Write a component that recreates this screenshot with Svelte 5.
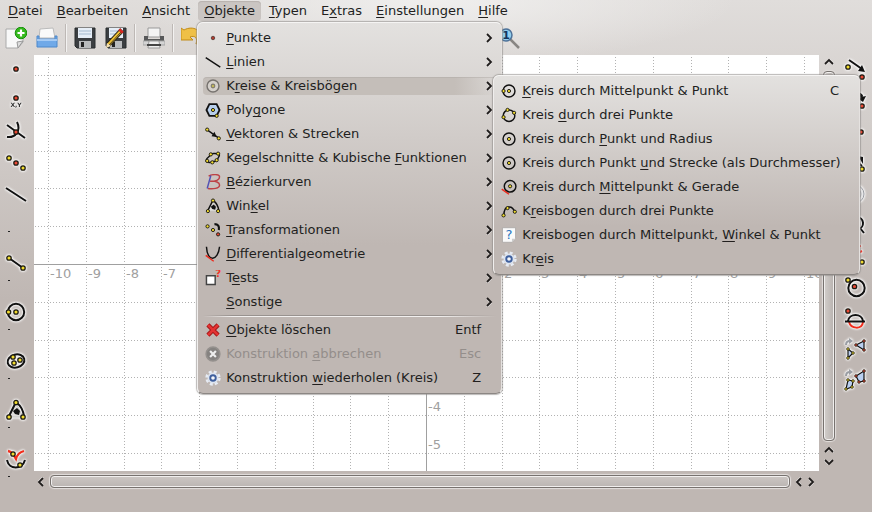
<script>
  const menus = ['_Datei', '_Bearbeiten', '_Ansicht', '_Objekte', '_Typen', 'E_xtras', '_Einstellungen', '_Hilfe'];

  const objectMenu = [
    { label: '_Punkte', icon: 'dot', sub: true },
    { label: '_Linien', icon: 'line', sub: true },
    { label: 'K_reise & Kreisbögen', icon: 'circleFaded', sub: true, open: true },
    { label: 'Poly_gone', icon: 'polygon', sub: true },
    { label: '_Vektoren & Strecken', icon: 'vector', sub: true },
    { label: 'Kegelschnitte & Kubische _Funktionen', icon: 'cubic', sub: true },
    { label: '_Bézierkurven', icon: 'bezier', sub: true },
    { label: 'Win_kel', icon: 'angle', sub: true },
    { label: '_Transformationen', icon: 'transform', sub: true },
    { label: '_Differentialgeometrie', icon: 'tangent', sub: true },
    { label: 'T_ests', icon: 'test', sub: true },
    { label: '_Sonstige', sub: true },
    { separator: true },
    { label: '_Objekte löschen', icon: 'delete', key: 'Entf' },
    { label: 'Konstruktion _abbrechen', icon: 'cancel', key: 'Esc', disabled: true },
    { label: 'Konstruktion _wiederholen (Kreis)', icon: 'gear', key: 'Z' }
  ];

  const circleMenu = [
    { label: '_Kreis durch Mittelpunkt & Punkt', icon: 'circle', key: 'C' },
    { label: 'Kreis _durch drei Punkte', icon: 'circle3' },
    { label: 'Kreis durch _Punkt und Radius', icon: 'circleCenter' },
    { label: 'Kreis durch Punkt _und Strecke (als Durchmesser)', icon: 'circleCenter' },
    { label: 'Kreis durch _Mittelpunkt & Gerade', icon: 'circleTangent' },
    { label: 'K_reisbogen durch drei Punkte', icon: 'arc' },
    { label: 'Kreisbogen durch Mittelpunkt, _Winkel & Punkt', icon: 'help' },
    { label: 'Kr_eis', icon: 'gear' }
  ];

  const fileTools = [
    { icon: 'new', label: 'Neu' },
    { icon: 'open', label: 'Öffnen' },
    null,
    { icon: 'save', label: 'Speichern' },
    { icon: 'saveAs', label: 'Speichern unter' },
    null,
    { icon: 'print', label: 'Drucken' },
    null,
    { icon: 'undo', label: 'Rückgängig' }
  ];

  const pointTools = ['point', 'pointXY', 'intersect', 'midpoint', 'line'];
  const shapeTools = ['segment', 'circle', 'conic', 'angle', 'curves'];
  const transformTools = ['translate', 'rotate', 'reflect', 'scale', 'ghost', 'similar', 'project', 'invert', 'dome', 'triangles', 'quads'];

  const unit = 37.8;
  const origin = { x: 392, y: 209 };
  const range = (from, to) => Array.from({ length: to - from + 1 }, (_, i) => from + i).filter((n) => n !== 0);
  const steps = range(-50, 50);
  const xLabels = range(-10, 10);
  const yLabels = range(-5, 5);
  const gridX = (n) => origin.x + Math.round(n * unit);
  const gridY = (n) => origin.y - Math.round(n * unit);

  const split = (label) => {
    const i = label.indexOf('_');
    return [label.slice(0, i), label[i + 1], label.slice(i + 2)];
  };
</script>

{#snippet caption(label)}
  {@const p = split(label)}<span>{p[0]}<u>{p[1]}</u>{p[2]}</span>
{/snippet}

{#snippet pt(x, y, c = '#f2dc2e')}
  <circle cx={x} cy={y} r="2.2" fill={c} stroke="#1c1a12" stroke-width="1.300" />
{/snippet}

{#snippet red(x, y)}
  {@render pt(x, y, '#ea4935')}
{/snippet}

{#snippet icon(name, size)}
  <svg class="icon" width={size} height={size} viewBox="0 0 22 22" fill="none" stroke="#111" stroke-width="2" aria-hidden="true">
    {#if name === 'dot'}
      <circle cx="11" cy="11" r="2.4" fill="#b03b30" stroke="#59413c" stroke-width="1.2" />
    {:else if name === 'point'}
      {@render red(11, 10)}
    {:else if name === 'pointXY'}
      {@render red(11, 8)}
      <text x="11" y="17" text-anchor="middle" font-size="6" font-weight="bold" fill="#333" stroke="none">X,Y</text>
    {:else if name === 'intersect'}
      <path d="M2 4 20 17M12 1C16 9 11 17 2 16" />{@render red(11, 11)}
    {:else if name === 'midpoint'}
      {@render pt(4, 6)}{@render red(11, 11)}{@render pt(18, 16)}
    {:else if name === 'line'}
      <path d="M1 5 21 18" />
    {:else if name === 'segment'}
      <path d="M4 6 18 16" />{@render pt(4, 6)}{@render pt(18, 16)}
    {:else if name === 'vector'}
      <path d="M4 6 18 16" /><path d="m9 14 7 1-3-7z" fill="#111" stroke="none" />{@render pt(3, 5)}{@render pt(19, 17)}
    {:else if name === 'circle'}
      <circle cx="11" cy="11" r="8.2" />{@render pt(3.5, 11)}{@render pt(11, 11)}
    {:else if name === 'circleCenter'}
      <circle cx="11" cy="11" r="8.2" />{@render pt(11, 11)}
    {:else if name === 'circleFaded'}
      <circle cx="11" cy="11" r="8.2" fill="#d5d1cc" stroke="#77736f" /><circle cx="11" cy="11" r="2.3" fill="#d9cd52" stroke="#85806f" />
    {:else if name === 'circle3'}
      <circle cx="11" cy="12" r="8" />{@render pt(3.5, 14)}{@render pt(9, 4)}{@render pt(18, 8)}
    {:else if name === 'circleTangent'}
      <circle cx="12.500" cy="10" r="8" /><path d="m1 14 10 7" stroke="#ed2b1c" />{@render pt(12.5, 10)}
    {:else if name === 'arc'}
      <path d="M4 17C4 2 16 3 19 13" />{@render pt(3.5, 17)}{@render pt(9, 7)}{@render pt(19, 12)}
    {:else if name === 'polygon'}
      <path d="M6 3h10l4 8-4 8H6l-4-8z" fill="#b8cfeb" stroke-width="2.5" />{@render pt(11, 11)}{@render pt(16, 19)}
    {:else if name === 'cubic'}
      <path d="M8 6c4-3 6 0 11-1 3 3-2 5-2 9-3 4-6 0-9 3-4 1-7-1-6-4 1-3 4-3 6-7z" />
      {@render pt(8, 6)}{@render pt(18, 5)}{@render pt(16, 14)}{@render pt(10, 17)}{@render pt(3, 15)}
    {:else if name === 'conic'}
      <ellipse cx="11" cy="11" rx="8.500" ry="6.500" transform="rotate(-15 11 11)" />{@render pt(8, 7)}{@render pt(9, 13)}{@render pt(15, 10)}
    {:else if name === 'bezier'}
      <path d="M5 3C10 0 20 0 20 4c0 5-7 6-13 6 8-1 13 2 13 5 0 5-9 6-16 5" stroke="#bd4145" /><path d="M8 2 3 20" stroke="#5351b4" />
    {:else if name === 'angle'}
      <path d="M11 4 4 18h14z" fill="#dfdddb" stroke="#c4c2c0" stroke-width="1" /><path d="m4 17 6-12M12 4c4 3 6 7 7 13" /><path d="m8 12 4-3 3 3-1 4-4-1z" fill="#111" stroke="none" />
      {@render pt(11, 3.5)}{@render pt(4, 18)}{@render pt(18, 18)}
    {:else if name === 'curves'}
      <path d="M3 3c5 1 6 5 8 8 1-4 4-7 8-8" stroke="#f12d1c" stroke-width="2.300" /><path d="M2 12c2 10 15 10 18 0" />{@render pt(8, 6)}{@render pt(15, 17)}
    {:else if name === 'transform'}
      <path d="M13 3c5 0 7 3 6 8" stroke-width="3" />{@render pt(3.5, 6)}{@render pt(11, 11)}{@render red(18, 17)}
    {:else if name === 'tangent'}
      <path d="M2 1C3 23 18 21 20 1" /><path d="m1 13 11 8" stroke="#ed2b1c" />
    {:else if name === 'test'}
      <path d="M2 8h12v12H2z" fill="#fff" stroke="#444" /><text x="14" y="10" font-size="14" font-weight="bold" fill="#ef3529" stroke="none">?</text>
    {:else if name === 'delete'}
      <path d="m4 4 14 14M18 4 4 18" stroke="#a31818" stroke-width="6" /><path d="m4 4 14 14M18 4 4 18" stroke="#e33333" stroke-width="3.500" />
    {:else if name === 'cancel'}
      <circle cx="11" cy="11" r="9.500" fill="#858280" stroke="#94908d" /><path d="m7 7 8 8m0-8-8 8" stroke="#eee" stroke-width="3" />
    {:else if name === 'gear'}
      <circle cx="11" cy="11" r="8.800" stroke="#e6ebf3" stroke-width="3.500" stroke-dasharray="4 2.910" /><circle cx="11" cy="11" r="7.500" fill="#dde4ef" stroke="none" />
      <circle cx="11" cy="11" r="3.800" fill="#f4f7fb" stroke="#3e5f9d" stroke-width="2.600" />
    {:else if name === 'help'}
      <path d="M2 1h18v15l-5 5H2z" fill="#fafafa" stroke="#a5a3a1" stroke-width="1" /><path d="m20 16-5 5v-5z" fill="#ccc" stroke="none" />
      <text x="11" y="17" text-anchor="middle" font-size="18" fill="#2874c0" stroke="none">?</text>
    {:else if name === 'new'}
      <path d="M1 2h17v13l-5 6H1z" fill="#f8f8f8" stroke="#aaa" stroke-width="1" /><path d="m18 14-5 7-1-6z" fill="#ddd" stroke="#999" stroke-width="1" />
      <circle cx="16" cy="6" r="5.800" fill="#35b91c" stroke="#16900b" stroke-width="1" /><path d="M12.500 6h7M16 2.500v7" stroke="#fff" stroke-width="2.200" />
    {:else if name === 'open'}
      <path d="m4 2 13-1 2 10H3z" fill="#fafafa" stroke="#bbb" stroke-width="1" /><path d="M1 9h2v3h16V9h2v11H1z" fill="#70a9e8" stroke="#4d88cb" stroke-width="1" /><path d="M1 13h20" stroke="#bad8fa" stroke-width="1.500" />
    {:else if name === 'save' || name === 'saveAs'}
      <path d="M1 1h20v20H3l-2-2z" fill="#3b3e41" stroke="#292c2e" stroke-width="1" /><path d="M4 1h14v10H4z" fill="#e6eef7" stroke="none" /><path d="M5 4h12M5 7h12" stroke="#a5bacf" stroke-width="1" />
      <path d="M5 14h12v7H5z" fill="#b9bbbd" stroke="none" /><path d="M7 15h3v5H7z" fill="#222" stroke="none" />
      {#if name === 'saveAs'}
        <path d="M3 18 17 3" stroke="#2b2519" stroke-width="5" /><path d="M3 18 16 4" stroke="#f1c232" stroke-width="3" /><path d="m4 18 12-13" stroke="#4d4121" stroke-width="1" /><path d="m15 5 2-2" stroke="#d82822" stroke-width="5" /><path d="m1 21 1-5 4 3z" fill="#f2deb0" stroke="none" />
      {/if}
    {:else if name === 'print'}
      <path d="M5 1h12v9H5z" fill="#f4f4f4" stroke="#999" stroke-width="1" /><path d="M1 9h4v3h12V9h4v6H1z" fill="#575859" stroke="none" /><path d="M0 14h22v4H0z" fill="#d4d4d4" stroke="#a5a5a5" stroke-width="1" /><path d="M6 14h10l1 7H5z" fill="#eee" stroke="#999" stroke-width="1" /><path d="M4 18h14" stroke="#444" />
    {:else if name === 'undo'}
      <path d="M0 1l3 2c9-5 19 0 17 12l-5 2c2-6-1-9-6-7l3 3H0z" fill="#efc047" stroke="#c18b19" stroke-width="1" />
    {:else if name === 'zoom'}
      <path d="m12 12 9 9" stroke="#898683" stroke-width="2.500" /><circle cx="8" cy="8" r="6" fill="#91cfee" stroke="#4e7299" stroke-width="1.500" /><text x="8" y="12" text-anchor="middle" font-size="11" font-weight="bold" fill="#15355d" stroke="none">1</text>
    {:else if name === 'translate'}
      <path d="m5 1 13 9" /><path d="m21 13-7-1 4-6z" fill="#111" stroke="none" />{@render pt(4, 8)}{@render red(18, 18)}
    {:else if name === 'rotate'}
      <path d="M10 3c4 0 7 1 8 4" stroke-width="3" /><path d="m13 8 9-2-3 6z" fill="#111" stroke="none" />{@render pt(4, 10)}{@render red(18, 16)}
    {:else if name === 'reflect'}
      <path d="M10 1v20" />{@render pt(4, 11)}{@render red(17, 11)}
    {:else if name === 'scale'}
      <path d="m12 9 6 5" /><path d="m14 4 5 1v7z" fill="#111" stroke="none" />{@render red(8, 8)}{@render pt(18, 17)}
    {:else if name === 'ghost'}
      <circle cx="11" cy="11" r="9" fill="#e7e7e8" stroke="#999ba1" stroke-width="1" /><circle cx="11" cy="11" r="6" stroke="#b0b1b5" stroke-width="1" />
    {:else if name === 'similar'}
      <path d="M12 3c9 0 9 11 2 12m2-1 4 5" />
    {:else if name === 'project'}
      <path d="m3 3 14-2M12 9l6-3" stroke="#ef3529" />{@render pt(18, 17)}
    {:else if name === 'invert'}
      <circle cx="12.500" cy="12" r="8.200" />{@render pt(4, 4)}{@render red(10.5, 10.5)}
    {:else if name === 'dome'}
      <path d="M4 14c1-8 14-8 15 0" /><path d="M5 15c2 7 13 8 14 0" stroke="#f12d1c" /><path d="M1 14.500h20" />{@render red(4, 4)}
    {:else if name === 'triangles'}
      <path d="m4 11 5 4-5 5zM12 7l8-4v9z" fill="#b9cff0" stroke-width="1.200" /><path d="M2 7c0-3 2-4 4-4" stroke="#9a9da3" stroke-width="2" /><path d="m5 0 4 3-4 3z" fill="#9a9da3" stroke="none" />
      <g class="small">{@render pt(4, 11)}{@render pt(9, 15)}{@render pt(4, 20)}{@render red(12, 7)}{@render red(20, 3)}{@render red(20, 12)}</g>
    {:else if name === 'quads'}
      <path d="m4 11 5 1-1 6-6 2zM12 7l8-5v10l-5 1z" fill="#b9cff0" stroke-width="1.200" /><path d="M2 7c0-3 2-4 4-4" stroke="#9a9da3" stroke-width="2" /><path d="m5 0 4 3-4 3z" fill="#9a9da3" stroke="none" />
      <g class="small">{@render pt(4, 11)}{@render pt(9, 12)}{@render pt(8, 18)}{@render pt(2, 20)}{@render red(12, 7)}{@render red(20, 2)}{@render red(20, 12)}{@render red(15, 13)}</g>
    {/if}
  </svg>
{/snippet}

{#snippet chevron(turn)}
  <svg class="chevron {turn}" width="10" height="10" viewBox="0 0 10 10" fill="none" aria-hidden="true">
    <path d="m3 2 4 4-4 4" stroke="#f3f1f0" stroke-width="1.500" /><path d="m3 1 4 4-4 4" stroke="#1f1c1b" stroke-width="1.800" />
  </svg>
{/snippet}

{#snippet entries(items)}
  {#each items as item}
    {#if item.separator}
      <div class="rule" role="separator"></div>
    {:else}
      <div class="entry">
        <button class="row" class:open={item.open} disabled={item.disabled} role="menuitem">
          <span class="slot">{#if item.icon}{@render icon(item.icon, 16)}{/if}</span>
          {@render caption(item.label)}
          {#if item.key}<kbd>{item.key}</kbd>{/if}
          {#if item.sub}<span class="more">{@render chevron('right')}</span>{/if}
        </button>
        {#if item.open}
          <div class="menu sub" role="menu">{@render entries(circleMenu)}</div>
        {/if}
      </div>
    {/if}
  {/each}
{/snippet}

<div class="app">
  <nav class="menubar">
    {#each menus as label}
      <div class="top">
        <button class="title" class:active={label === '_Objekte'}>{@render caption(label)}</button>
        {#if label === '_Objekte'}
          <div class="menu main" role="menu">{@render entries(objectMenu)}</div>
        {/if}
      </div>
    {/each}
  </nav>

  <div class="toolbar">
    {#each fileTools as tool}
      {#if tool}
        <button class="tool" aria-label={tool.label}>{@render icon(tool.icon, 22)}</button>
      {:else}
        <span class="divider"></span>
      {/if}
    {/each}
    <button class="tool view" aria-label="Originalgröße">{@render icon('zoom', 22)}</button>
  </div>

  <main>
    <div class="palette">
      {#each pointTools as name}
        <button class="tool" aria-label={name}>{@render icon(name, 22)}</button>
      {/each}
      <span class="grip first"></span>
      {#each shapeTools as name}
        <button class="tool" aria-label={name}>{@render icon(name, 22)}</button>
        <span class="grip"></span>
      {/each}
    </div>

    <div class="document">
      <div class="view-row">
        <svg class="canvas" role="img" aria-label="Koordinatensystem">
          <g class="grid">
            {#each steps as n}
              <line x1={gridX(n) + 0.5} x2={gridX(n) + 0.5} y1="2" y2="100%" />
              <line x1="1" x2="100%" y1={gridY(n) + 0.5} y2={gridY(n) + 0.5} />
            {/each}
          </g>
          <g class="axes">
            <line x1={origin.x + 0.5} x2={origin.x + 0.5} y1="0" y2="100%" />
            <line x1="0" x2="100%" y1={origin.y + 0.5} y2={origin.y + 0.5} />
          </g>
          {#each xLabels as n}
            <text x={gridX(n) + 2} y={origin.y + 14}>{n}</text>
          {/each}
          {#each yLabels as n}
            <text x={origin.x + 2} y={gridY(n) - 4}>{n}</text>
          {/each}
        </svg>
        <div class="scroll vertical">
          <button aria-label="Nach oben">{@render chevron('up')}</button>
          <div class="handle"></div>
          <button aria-label="Nach oben">{@render chevron('up')}</button>
          <button aria-label="Nach unten">{@render chevron('down')}</button>
        </div>
      </div>
      <div class="scroll horizontal">
        <button aria-label="Nach links">{@render chevron('left')}</button>
        <div class="handle"></div>
        <button aria-label="Nach links">{@render chevron('left')}</button>
        <button aria-label="Nach rechts">{@render chevron('right')}</button>
      </div>
    </div>

    <div class="palette">
      {#each transformTools as name}
        <button class="tool" aria-label={name}>{@render icon(name, 22)}</button>
      {/each}
    </div>
  </main>
  <footer></footer>
</div>

<style>
  :global(body) {
    margin: 0;
  }
  .app {
    display: flex;
    flex-direction: column;
    min-height: 100vh;
    overflow: hidden;
    font: 13px/16px 'DejaVu Sans', sans-serif;
    color: #221f1e;
    background:
      radial-gradient(ellipse 300px 64px at 50% 0, #f1f0efee, #f1f0ef00),
      linear-gradient(#e0dddb, #bfb7b3 300px);
  }
  button {
    margin: 0;
    padding: 0;
    border: 0;
    background: none;
    font: inherit;
    color: inherit;
  }
  u {
    text-decoration: underline;
    text-decoration-thickness: 1px;
    text-underline-offset: 2px;
    text-decoration-skip-ink: none;
  }
  .icon,
  .chevron,
  .canvas {
    display: block;
  }
  .menubar {
    display: flex;
    gap: 2px;
    height: 22px;
    padding-left: 2px;
  }
  .top {
    position: relative;
  }
  .title {
    display: block;
    height: 20px;
    margin-top: 1px;
    padding: 0 6px;
    border-radius: 4px;
    white-space: nowrap;
  }
  .title.active {
    background: #cac5c2;
    box-shadow: inset 0 1px 1px #b8b2af;
  }
  .menu {
    position: absolute;
    z-index: 2;
    box-sizing: border-box;
    padding: 3px 5px;
    border: 1px solid;
    border-color: #f5f4f3 #e5e2e0 #8c8784 #f0eeed;
    border-radius: 6px;
    box-shadow: 0 0 1px 1px #8e8a8799;
  }
  .main {
    top: 22px;
    left: -1px;
    width: 305px;
    background: linear-gradient(#e3e1df, #bfb7b3 60%);
  }
  .sub {
    top: 1px;
    left: 290px;
    width: 367px;
    background: linear-gradient(#e3e1df, #bfb7b3 76%);
  }
  .entry {
    display: flow-root;
    position: relative;
  }
  .row {
    display: flex;
    align-items: center;
    box-sizing: border-box;
    width: 100%;
    height: 24px;
    padding: 0 2px;
    text-align: left;
    white-space: nowrap;
  }
  .row.open {
    height: 18px;
    margin: 3px 0;
    border-radius: 4px;
    background: linear-gradient(90deg, #c4beb9 86%, #c4beb900);
    box-shadow: inset 0 1px 0 #aaa4a066;
  }
  .row:disabled {
    color: #948e8b;
  }
  .slot {
    width: 16px;
    margin-right: 5px;
  }
  kbd {
    margin-left: auto;
    margin-right: 13px;
    font: inherit;
  }
  .more {
    margin-left: auto;
  }
  .rule {
    height: 2px;
    margin: 1px 0;
    background:
      linear-gradient(90deg, #a29c9900, #98928f 10%, #98928f 80%, #a29c9900) 0 0 / 100% 1px no-repeat,
      linear-gradient(90deg, #fff0, #f2f0ef 10%, #f2f0ef 80%, #fff0) 0 1px / 100% 1px no-repeat;
  }
  .toolbar {
    display: flex;
    align-items: center;
    height: 32px;
  }
  .tool {
    display: flex;
    flex: none;
    align-items: center;
    justify-content: center;
    width: 32px;
    height: 31px;
  }
  .toolbar .tool {
    width: 31px;
  }
  .toolbar .view {
    margin-left: 286px;
  }
  .divider {
    box-sizing: border-box;
    width: 1px;
    height: 28px;
    margin: 0 3px;
    background: #bdb8b5;
    box-shadow: 1px 0 #f3f2f1;
  }
  main {
    display: flex;
    flex: 1;
  }
  .palette {
    display: flex;
    flex: none;
    flex-direction: column;
    width: 34px;
  }
  .palette:last-child {
    width: 33px;
  }
  .palette .icon {
    filter: drop-shadow(0 0 1px #fff) drop-shadow(0 0 1px #fff);
  }
  .grip {
    box-sizing: border-box;
    width: 2px;
    height: 18px;
    margin-left: 8px;
    background: linear-gradient(#222, #222) 0 2px / 2px 1px no-repeat;
  }
  .grip.first {
    margin-top: 20px;
  }
  .small :global(circle) {
    r: 1.3px;
    stroke-width: 0.8;
  }
  .document {
    display: flex;
    flex: 1;
    flex-direction: column;
    min-width: 0;
    padding-top: 1px;
  }
  .view-row {
    display: flex;
    flex: 1;
  }
  .canvas {
    flex: 1;
    min-width: 0;
    height: auto;
    background: #fff;
  }
  .canvas text {
    fill: #a0a0a0;
  }
  .grid {
    stroke: #b2b2b2;
    stroke-dasharray: 1 2;
  }
  .axes {
    stroke: #a0a0a0;
  }
  .scroll {
    display: flex;
    align-items: center;
  }
  .scroll button {
    display: flex;
    flex: none;
    align-items: center;
    justify-content: center;
    width: 12px;
    height: 12px;
  }
  .vertical {
    flex-direction: column;
    width: 20px;
    padding: 1px 0 3px;
  }
  .horizontal {
    height: 21px;
    margin-right: 20px;
    padding: 0 2px 0 1px;
  }
  .handle {
    flex: 1;
    box-sizing: border-box;
    margin: 3px;
    border: 1px solid #77726f;
    border-radius: 4px;
    box-shadow: inset 0 0 0 1px #f1efee, 0 0 1px 1px #e3dfdd;
  }
  .vertical .handle {
    width: 12px;
    background: linear-gradient(90deg, #d2cecb, #b8b2af);
  }
  .horizontal .handle {
    height: 13px;
    background: linear-gradient(#ccc7c4, #bbb5b2);
  }
  .up {
    transform: rotate(-90deg);
  }
  .down {
    transform: rotate(90deg);
  }
  .left {
    transform: rotate(180deg);
  }
  footer {
    height: 20px;
  }
</style>
